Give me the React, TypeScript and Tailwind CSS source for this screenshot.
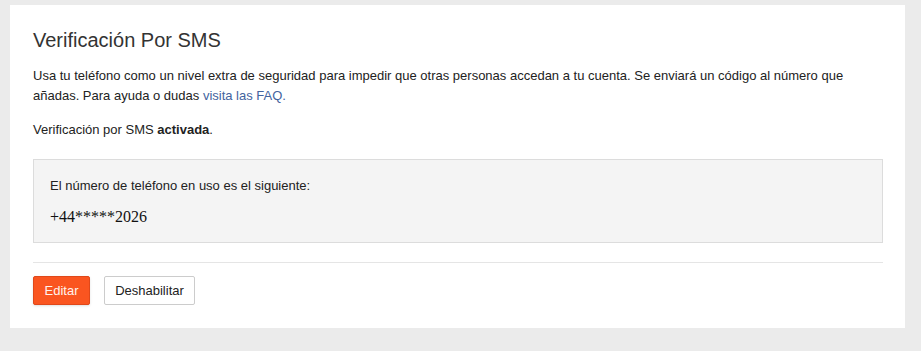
import React from 'react';

const SmsVerification: React.FC = () => {
  return (
    <div className="bg-white w-[895px] px-[23px] pr-[22px] pt-[23px] pb-[23px]">
      <h2 className="text-[20px] leading-[24px] text-[#333333] font-normal">Verificación Por SMS</h2>
      <p className="mt-[14px] text-[13px] leading-[20px] text-[#222222]">
        Usa tu teléfono como un nivel extra de seguridad para impedir que otras personas accedan a tu cuenta. Se enviará un código al número que añadas. Para ayuda o dudas{' '}
        <a href="#" className="text-[#43639e]">visita las FAQ.</a>
      </p>
      <p className="mt-[14px] text-[13px] leading-[20px] text-[#222222]">
        Verificación por SMS <b className="font-bold">activada</b>.
      </p>
      <div className="mt-[19px] h-[84px] border border-[#dcdcdc] bg-[#f4f4f4] pl-[16px] pt-[16px]">
        <p className="text-[13px] leading-[20px] text-[#222222]">El número de teléfono en uso es el siguiente:</p>
        <p className="mt-[11px] text-[16px] leading-[20px] text-[#111111] font-['Liberation_Serif',serif]">+44*****2026</p>
      </div>
      <div className="mt-[19px] border-t border-[#e5e5e5]" />
      <div className="mt-[13px] flex gap-[14px]">
        <button className="h-[29px] w-[57px] bg-[#fa5520] border border-[#e0481a] text-[#fff3ee] text-[13px] rounded-[2px] shadow-sm">
          Editar
        </button>
        <button className="h-[29px] w-[91px] bg-white border border-[#cccccc] text-[#222222] text-[13px] rounded-[2px]">
          Deshabilitar
        </button>
      </div>
    </div>
  );
};

export default function App() {
  return (
    <div className="min-h-[351px] bg-[#ebebeb] pt-[5px] pl-[10px] font-['Liberation_Sans',Arial,sans-serif]">
      <SmsVerification />
    </div>
  );
}
